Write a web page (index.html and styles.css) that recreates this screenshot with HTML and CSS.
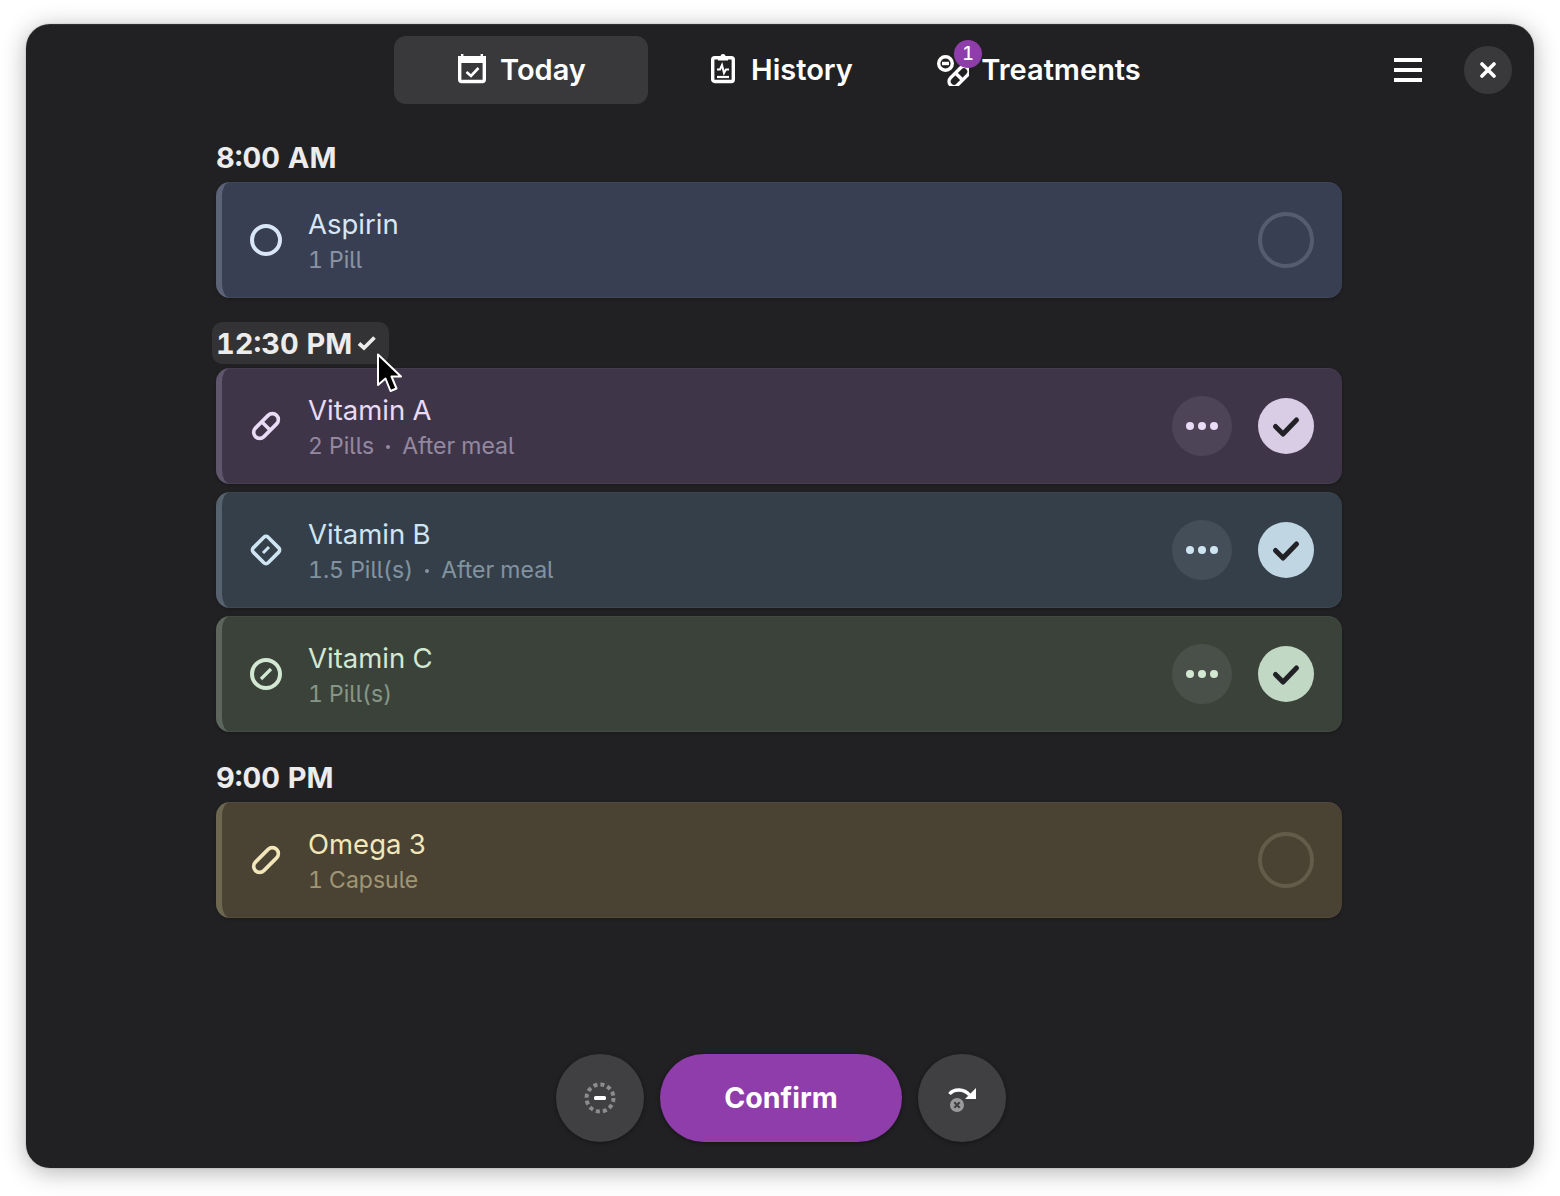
FILE: index.html
```html
<!DOCTYPE html>
<html lang="en">
<head>
<meta charset="utf-8">
<title>Today</title>
<link rel="stylesheet" href="styles.css">
</head>
<body>
<main class="window">
  <header class="header">
    <div class="header-side"></div>
    <nav class="tabs">
      <button class="tab tab-active">
        <svg class="tab-icon" viewBox="0 0 32 32"><rect x="3.7" y="3.7" width="24.6" height="23.8" rx="2" fill="none" stroke="currentColor" stroke-width="3.4"/><rect x="2" y="2" width="28" height="7" fill="currentColor"/><rect x="5" y="0" width="2.4" height="3" fill="currentColor"/><rect x="24.6" y="0" width="2.4" height="3" fill="currentColor"/><polyline points="10.5,18 15,22 22.5,14" fill="none" stroke="currentColor" stroke-width="2.6"/></svg>
        <span class="tab-label">Today</span>
      </button>
      <button class="tab">
        <svg class="tab-icon" viewBox="0 0 32 32"><rect x="5.7" y="3.7" width="20.6" height="23.8" rx="2" fill="none" stroke="currentColor" stroke-width="3.4"/><rect x="11" y="2" width="10" height="4.5" fill="currentColor"/><circle cx="16" cy="2.5" r="2.5" fill="currentColor"/><polyline points="10,15.5 13,15.5 15,11 17,19 19,15.5 22,15.5" fill="none" stroke="currentColor" stroke-width="2"/><line x1="10" y1="23" x2="22" y2="23" stroke="currentColor" stroke-width="2.2"/></svg>
        <span class="tab-label">History</span>
      </button>
      <button class="tab">
        <span class="tab-icon-wrap">
          <svg class="tab-icon" viewBox="0 0 32 32" fill="none" stroke="currentColor" stroke-width="3.4"><circle cx="8.5" cy="9.5" r="6.8"/><line x1="5" y1="9.5" x2="12" y2="9.5"/><g transform="rotate(-45 22 22.5)"><rect x="10" y="17.5" width="24" height="10" rx="5"/><line x1="22" y1="17.5" x2="22" y2="27.5"/></g></svg>
          <span class="badge">1</span>
        </span>
        <span class="tab-label">Treatments</span>
      </button>
    </nav>
    <div class="header-side header-actions">
      <button class="menu-btn" aria-label="Menu"><span></span><span></span><span></span></button>
      <button class="close-btn" aria-label="Close">
        <svg viewBox="0 0 16 16" class="close-icon"><path d="M2 2 14 14M14 2 2 14" stroke="currentColor" stroke-width="3.6" stroke-linecap="round"/></svg>
      </button>
    </div>
  </header>

  <section class="schedule">
    <div class="group">
      <div class="time"><span>8:00 AM</span></div>
      <article class="card card-blue">
        <svg class="med-icon" viewBox="0 0 32 32" fill="none" stroke="currentColor" stroke-width="4"><circle cx="16" cy="16" r="14"/></svg>
        <div class="med"><div class="med-name">Aspirin</div><div class="med-info">1 Pill</div></div>
        <span class="tick"></span>
      </article>
    </div>

    <div class="group">
      <div class="time time-hover">
        <span>12:30 PM</span>
        <svg class="time-check" viewBox="0 0 20 20" fill="none" stroke="currentColor" stroke-width="3.8"><polyline points="2,10.5 7,15 17.5,4.5"/></svg>
        <svg class="cursor" viewBox="0 0 26 42"><path d="M2 1.5 2 32 9.5 25.5 14.5 38 20.5 35.5 15.5 23.5 25 23.5Z" fill="#000" stroke="#fff" stroke-width="2" stroke-linejoin="round"/></svg>
      </div>
      <div class="cards">
        <article class="card card-purple">
          <svg class="med-icon" viewBox="0 0 32 32" fill="none" stroke="currentColor" stroke-width="3.6"><g transform="rotate(-45 16 16)"><rect x="1" y="10" width="30" height="12" rx="6"/><line x1="16" y1="10" x2="16" y2="22"/></g></svg>
          <div class="med"><div class="med-name">Vitamin A</div><div class="med-info">2 Pills<i class="sep"></i>After meal</div></div>
          <button class="more" aria-label="More"><i></i><i></i><i></i></button>
          <span class="tick tick-on"><svg viewBox="0 0 56 56" fill="none" stroke="#222226" stroke-width="5" stroke-linecap="round" stroke-linejoin="round"><polyline points="17.5,28.5 25,36 38.5,22"/></svg></span>
        </article>
        <article class="card card-teal">
          <svg class="med-icon" viewBox="0 0 32 32" fill="none" stroke="currentColor" stroke-width="3.6"><rect x="5.5" y="5.5" width="21" height="21" rx="3" transform="rotate(45 16 16)"/><line x1="13" y1="19" x2="19" y2="13" stroke-width="3"/></svg>
          <div class="med"><div class="med-name">Vitamin B</div><div class="med-info">1.5 Pill(s)<i class="sep"></i>After meal</div></div>
          <button class="more" aria-label="More"><i></i><i></i><i></i></button>
          <span class="tick tick-on"><svg viewBox="0 0 56 56" fill="none" stroke="#222226" stroke-width="5" stroke-linecap="round" stroke-linejoin="round"><polyline points="17.5,28.5 25,36 38.5,22"/></svg></span>
        </article>
        <article class="card card-green">
          <svg class="med-icon" viewBox="0 0 32 32" fill="none" stroke="currentColor" stroke-width="4"><circle cx="16" cy="16" r="14"/><line x1="11" y1="21" x2="21" y2="11" stroke-width="3.2"/></svg>
          <div class="med"><div class="med-name">Vitamin C</div><div class="med-info">1 Pill(s)</div></div>
          <button class="more" aria-label="More"><i></i><i></i><i></i></button>
          <span class="tick tick-on"><svg viewBox="0 0 56 56" fill="none" stroke="#222226" stroke-width="5" stroke-linecap="round" stroke-linejoin="round"><polyline points="17.5,28.5 25,36 38.5,22"/></svg></span>
        </article>
      </div>
    </div>

    <div class="group">
      <div class="time"><span>9:00 PM</span></div>
      <article class="card card-olive">
        <svg class="med-icon" viewBox="0 0 32 32" fill="none" stroke="currentColor" stroke-width="3.6"><g transform="rotate(-45 16 16)"><rect x="1" y="10" width="30" height="12" rx="6"/></g></svg>
        <div class="med"><div class="med-name">Omega 3</div><div class="med-info">1 Capsule</div></div>
        <span class="tick"></span>
      </article>
    </div>
  </section>

  <footer class="footer">
    <button class="round-btn" aria-label="Skip">
      <svg class="round-icon" viewBox="0 0 32 32" fill="none"><circle cx="16" cy="16" r="13.5" stroke="#8c8c8e" stroke-width="4" stroke-dasharray="4 3.07"/><rect x="10" y="14" width="12" height="4" rx="1.5" fill="#fff"/></svg>
    </button>
    <button class="confirm">Confirm</button>
    <button class="round-btn" aria-label="Snooze">
      <svg class="round-icon" viewBox="0 0 32 32" fill="none"><path d="M3.5 12C8 6.5 18 6.5 23.5 13" stroke="#fff" stroke-width="3.4"/><polygon points="30,6 30,17 19,17" fill="#fff"/><circle cx="11" cy="23" r="7" fill="#9a9a9c"/><path d="M8.3 20.3 13.7 25.7M13.7 20.3 8.3 25.7" stroke="#404043" stroke-width="2.2"/></svg>
    </button>
  </footer>
</main>
</body>
</html>
```

FILE: styles.css
```css
* { box-sizing: border-box; }

html, body { height: 100%; }

body {
  margin: 0;
  padding: 24px 26px 28px;
  background: #fff;
  font-family: Inter, "Liberation Sans", sans-serif;
  font-feature-settings: "cv05", "tnum";
}

button {
  font: inherit;
  border: 0;
  padding: 0;
  color: inherit;
  background: none;
}

.window {
  height: 1144px;
  display: flex;
  flex-direction: column;
  background: #212123;
  border-radius: 24px;
  color: #fff;
  box-shadow: 0 0 0 1px rgba(0, 0, 0, .06), 0 4px 24px rgba(0, 0, 0, .3), inset 0 1px 0 rgba(255, 255, 255, .07);
}

.header {
  display: grid;
  grid-template-columns: 1fr auto 1fr;
  padding: 12px 22px 0;
}

.tabs { display: flex; gap: 5px; }

.tab {
  width: 254px;
  height: 68px;
  display: flex;
  align-items: center;
  justify-content: center;
  gap: 12px;
  border-radius: 12px;
  font-size: 29px;
  font-weight: 600;
}

.tab-label { margin-top: -2px; }

.tab-active { background: #39393b; }

.tab-icon { width: 32px; height: 32px; display: block; }

.tab-icon-wrap { position: relative; display: block; }

.badge {
  position: absolute;
  top: -14px;
  left: 17px;
  width: 28px;
  height: 28px;
  border-radius: 50%;
  background: #8f3dab;
  font-size: 18px;
  font-weight: 500;
  line-height: 28px;
  text-align: center;
}

.header-actions {
  display: flex;
  justify-content: flex-end;
  align-items: center;
  gap: 42px;
}

.menu-btn {
  width: 28px;
  display: flex;
  flex-direction: column;
  gap: 6px;
}

.menu-btn span { height: 4px; background: #fff; }

.close-btn {
  width: 48px;
  height: 48px;
  border-radius: 50%;
  background: #39393b;
  display: flex;
  align-items: center;
  justify-content: center;
}

.close-icon { width: 16px; height: 16px; }

.schedule {
  width: 1126px;
  margin: 32px auto 0 190px;
  display: flex;
  flex-direction: column;
  gap: 24px;
}

.group { display: flex; flex-direction: column; gap: 4px; }

.cards { display: flex; flex-direction: column; gap: 8px; }

.time {
  position: relative;
  align-self: flex-start;
  height: 42px;
  display: flex;
  align-items: center;
  gap: 5px;
  margin-left: -4px;
  padding: 0 12px 0 4px;
  border-radius: 10px;
  font-size: 29px;
  font-weight: 700;
  color: #ececec;
}

.time-hover { background: #333335; }

.time-check { width: 20px; height: 20px; display: block; }

.cursor {
  position: absolute;
  left: 164px;
  top: 31px;
  width: 26px;
  height: 42px;
}

.card {
  height: 116px;
  display: flex;
  align-items: center;
  padding: 0 28px;
  border-left: 6px solid var(--stripe);
  border-radius: 14px;
  background: var(--bg);
  color: var(--fg);
  box-shadow: inset 0 1px 0 rgba(255, 255, 255, .04), inset 0 -1px 0 rgba(255, 255, 255, .05), 0 1px 3px rgba(0, 0, 0, .25);
}

.card-blue { --bg: #393f52; --stripe: #5b6378; --fg: #d8e6f8; --ring: #555c6f; --tick: #d8e6f8; }
.card-purple { --bg: #3e3549; --stripe: #5f566b; --fg: #e8dbf5; --ring: #5f566b; --tick: #d9cde6; }
.card-teal { --bg: #343f4a; --stripe: #56626e; --fg: #cfe4f2; --ring: #56626e; --tick: #c0d6e3; }
.card-green { --bg: #3a423a; --stripe: #5d665d; --fg: #d2e8d3; --ring: #5d665d; --tick: #c1d8c5; }
.card-olive { --bg: #4a4232; --stripe: #6d6650; --fg: #f1e7ba; --ring: #635c4a; --tick: #f1e7ba; }

.med-icon { width: 32px; height: 32px; flex: none; }

.med {
  flex: 1;
  margin-left: 26px;
  padding-top: 1px;
  display: flex;
  flex-direction: column;
  gap: 4px;
}

.med-name { font-size: 27.5px; line-height: 34px; }

.med-info {
  display: flex;
  align-items: center;
  font-size: 23px;
  line-height: 30px;
  opacity: .5;
}

.sep {
  width: 4px;
  height: 4px;
  margin: 2px 12px 0;
  border-radius: 50%;
  background: currentColor;
}

.more {
  width: 60px;
  height: 60px;
  margin-right: 26px;
  border-radius: 50%;
  background: rgba(255, 255, 255, .08);
  color: var(--fg);
  display: flex;
  align-items: center;
  justify-content: center;
  gap: 4px;
}

.more i { width: 8px; height: 8px; border-radius: 50%; background: currentColor; }

.tick {
  width: 56px;
  height: 56px;
  flex: none;
  border-radius: 50%;
  border: 4px solid var(--ring);
}

.tick-on { border: 0; background: var(--tick); }

.tick svg { display: block; }

.footer {
  margin-top: auto;
  padding: 0 0 26px 2px;
  display: flex;
  justify-content: center;
  gap: 16px;
}

.round-btn, .confirm {
  height: 88px;
  border-radius: 44px;
  box-shadow: 0 1px 4px rgba(0, 0, 0, .4);
}

.round-btn {
  width: 88px;
  background: #404043;
  display: flex;
  align-items: center;
  justify-content: center;
}

.round-icon { width: 32px; height: 32px; display: block; }

.confirm {
  width: 242px;
  padding-bottom: 2px;
  background: #8f3dab;
  font-size: 28.5px;
  font-weight: 700;
}
```
